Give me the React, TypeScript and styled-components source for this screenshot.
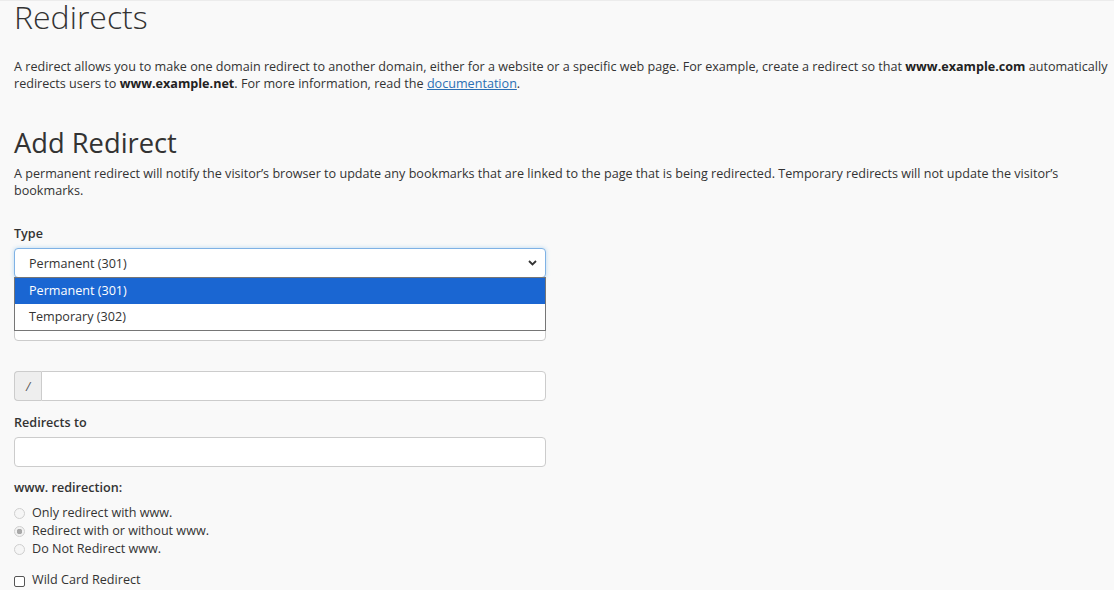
import React from "react";
import styled, { createGlobalStyle } from "styled-components";

const GlobalStyle = createGlobalStyle`
  html, body {
    margin: 0;
    padding: 0;
    background: #f9f9f9;
  }
  body {
    font-family: "Open Sans", "Noto Sans", sans-serif;
    font-size: 12.6px;
    color: #333;
    border-top: 1px solid #ececec;
  }
  * { box-sizing: border-box; }
`;

const Page = styled.main`
  padding: 0 5px 0 14px;
`;

const Title = styled.h1`
  margin: 0;
  font-size: 32px;
  font-weight: 300;
  line-height: 31px;
  color: #333;
`;

const Intro = styled.p`
  margin: 26px 0 0;
  line-height: 17px;
`;

const Strong = styled.strong`
  font-weight: 700;
  color: #222;
`;

const DocLink = styled.a`
  color: #2a6fb4;
  text-decoration: underline;
`;

const SectionTitle = styled.h2`
  margin: 37px 0 0;
  font-size: 27.3px;
  font-weight: 400;
  line-height: 28px;
  color: #333;
`;

const Note = styled.p`
  margin: 8px 0 0;
  padding-right: 42px;
  line-height: 17px;
`;

const Form = styled.form`
  width: 532px;
  margin-top: 26px;
`;

const Group = styled.div<{ $gap?: number }>`
  position: relative;
  margin-top: ${(p) => p.$gap ?? 0}px;
`;

const Label = styled.label`
  display: block;
  font-weight: 600;
  line-height: 18px;
  margin-bottom: 5px;
  color: #333;
`;

const SelectBox = styled.div<{ $focused?: boolean }>`
  display: flex;
  align-items: center;
  justify-content: space-between;
  height: 30px;
  padding: 0 8px 0 14px;
  background: #fff;
  border: 1px solid ${(p) => (p.$focused ? "#7fb2e5" : "#ccc")};
  border-radius: 4px;
  box-shadow: ${(p) =>
    p.$focused ? "0 0 4px rgba(102, 175, 233, 0.45)" : "none"};
  color: #333;
`;

const Chevron = () => (
  <svg width="9" height="6" viewBox="0 0 9 6" aria-hidden="true">
    <path d="M1 1l3.5 3.5L8 1" fill="none" stroke="#333" strokeWidth="1.8" />
  </svg>
);

const OptionList = styled.ul`
  position: absolute;
  left: 0;
  right: 0;
  top: 52px;
  margin: 0;
  padding: 0;
  list-style: none;
  background: #fff;
  border: 1px solid #767676;
  z-index: 5;
`;

const OptionItem = styled.li<{ $active?: boolean }>`
  height: 26px;
  line-height: 26px;
  padding-left: 14px;
  background: ${(p) => (p.$active ? "#1a66d2" : "#fff")};
  color: ${(p) => (p.$active ? "#fff" : "#333")};
`;

const InputGroup = styled.div`
  display: flex;
  height: 30px;
`;

const Addon = styled.span`
  display: flex;
  align-items: center;
  justify-content: center;
  width: 27px;
  background: #eee;
  border: 1px solid #ccc;
  border-right: 0;
  border-radius: 4px 0 0 4px;
  color: #555;
  font-style: italic;
  font-size: 12px;
`;

const TextInput = styled.input<{ $joined?: boolean }>`
  flex: 1;
  width: 100%;
  height: 30px;
  padding: 0 10px;
  border: 1px solid #ccc;
  border-radius: ${(p) => (p.$joined ? "0 4px 4px 0" : "4px")};
  background: #fff;
  font: inherit;
  outline: none;
`;

const Options = styled.div`
  margin-top: 7px;
`;

const Choice = styled.label`
  display: flex;
  align-items: center;
  gap: 7px;
  line-height: 18px;
  color: #333;
`;

const Radio = styled.input.attrs({ type: "radio" })`
  appearance: none;
  width: 11px;
  height: 11px;
  margin: 0;
  border: 1px solid #cfcfcf;
  border-radius: 50%;
  background: #f6f6f6;
  &:checked {
    background: radial-gradient(circle, #a8a8a8 0 2.6px, #f2f2f2 3px);
  }
`;

const Check = styled.input.attrs({ type: "checkbox" })`
  appearance: none;
  width: 11px;
  height: 11px;
  margin: 3px 0 0 0;
  border: 1px solid #555;
  border-radius: 2px;
  background: #fff;
`;

const CheckRow = styled(Choice)`
  margin-top: 13px;
`;

export default function App() {
  return (
    <>
      <GlobalStyle />
      <Page>
        <Title>Redirects</Title>
        <Intro>
          A redirect allows you to make one domain redirect to another domain,
          either for a website or a specific web page. For example, create a
          redirect so that <Strong>www.example.com</Strong> automatically
          redirects users to <Strong>www.example.net</Strong>. For more
          information, read the <DocLink href="#">documentation</DocLink>.
        </Intro>
        <SectionTitle>Add Redirect</SectionTitle>
        <Note>
          A permanent redirect will notify the visitor’s browser to update any
          bookmarks that are linked to the page that is being redirected.
          Temporary redirects will not update the visitor’s bookmarks.
        </Note>
        <Form onSubmit={(e) => e.preventDefault()}>
          <Group>
            <Label>Type</Label>
            <SelectBox $focused>
              <span>Permanent (301)</span>
              <Chevron />
            </SelectBox>
            <OptionList>
              <OptionItem $active>Permanent (301)</OptionItem>
              <OptionItem>Temporary (302)</OptionItem>
            </OptionList>
          </Group>
          <Group $gap={10}>
            <Label>https?://(www.)?</Label>
            <SelectBox>
              <span />
              <Chevron />
            </SelectBox>
          </Group>
          <Group $gap={30}>
            <InputGroup>
              <Addon>/</Addon>
              <TextInput $joined />
            </InputGroup>
          </Group>
          <Group $gap={13}>
            <Label>Redirects to</Label>
            <TextInput />
          </Group>
          <Group $gap={12}>
            <Label>www. redirection:</Label>
            <Options>
              <Choice>
                <Radio name="www" disabled />
                Only redirect with www.
              </Choice>
              <Choice>
                <Radio name="www" disabled defaultChecked />
                Redirect with or without www.
              </Choice>
              <Choice>
                <Radio name="www" disabled />
                Do Not Redirect www.
              </Choice>
            </Options>
            <CheckRow>
              <Check />
              Wild Card Redirect
            </CheckRow>
          </Group>
        </Form>
      </Page>
    </>
  );
}
